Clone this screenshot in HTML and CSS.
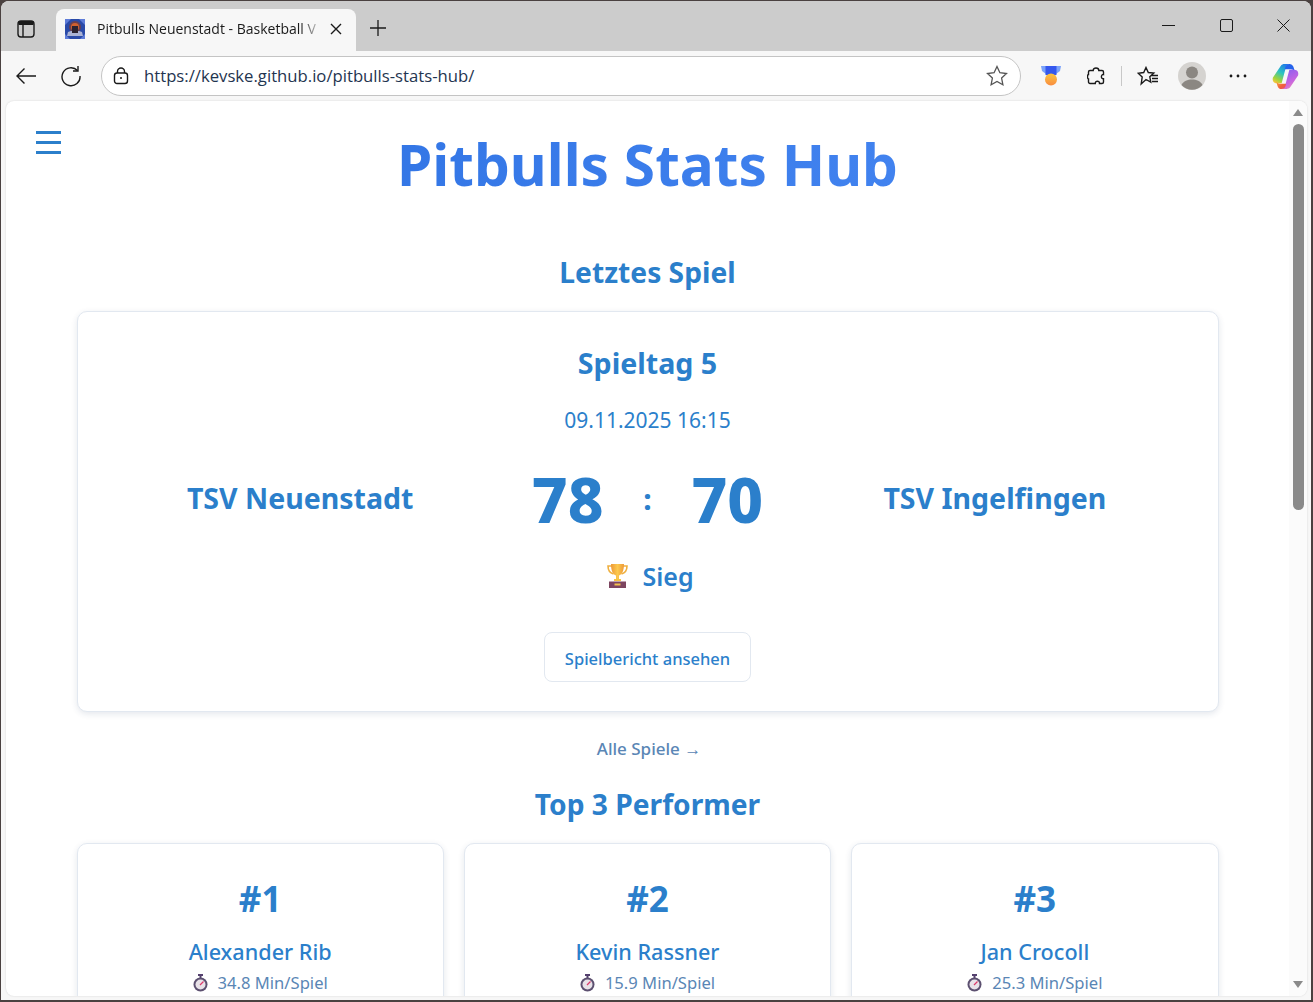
FILE: index.html
```html
<!DOCTYPE html>
<html lang="de">
<head>
	<meta charset="UTF-8">
	<title>Pitbulls Stats Hub</title>
	<link rel="stylesheet" href="styles.css">
</head>
<body>
	<div class="window">
		<div class="tabbar">
			<div class="tab-side">
				<svg width="18" height="18" viewBox="0 0 18 18" fill="none" stroke="#1a1a1a" stroke-width="1.4"><rect x="1" y="1" width="16" height="16" rx="3"/><path d="M1.500 3h15" stroke-width="4"/><path d="M6 4v13"/></svg>
			</div>
			<div class="tab">
				<svg class="favicon" width="20" height="20" viewBox="0 0 20 20"><rect width="20" height="20" fill="#2a4aa8"/><path d="M0 0h6L0 6zM20 0v6l-6-6zM0 20v-5l5 5zM20 20h-5l5-5z" fill="#5e7cd8"/><circle cx="10" cy="8" r="6" fill="#6a4050"/><circle cx="10" cy="8" r="4" fill="#d0602e"/><path d="M3 13l3-1h8l3 1 1 4H2z" fill="#aab2d4"/><path d="M7 7h6v7H7z" fill="#2a2230"/></svg>
				<span class="tab-title">Pitbulls Neuenstadt - Basketball V</span>
				<svg width="12" height="12" viewBox="0 0 12 12" stroke="#1a1a1a" stroke-width="1.4"><path d="M1 1l10 10M11 1L1 11"/></svg>
			</div>
			<svg class="new-tab" width="18" height="18" viewBox="0 0 18 18" stroke="#1a1a1a" stroke-width="1.3"><path d="M9 1v16M1 9h16"/></svg>
			<div class="window-buttons">
				<svg width="14" height="14" viewBox="0 0 14 14" stroke="#1a1a1a" stroke-width="1"><path d="M0 6.500h13"/></svg>
				<svg width="14" height="14" viewBox="0 0 14 14" fill="none" stroke="#1a1a1a" stroke-width="1"><rect x=".5" y=".5" width="12" height="12" rx="1.500"/></svg>
				<svg width="14" height="14" viewBox="0 0 14 14" stroke="#1a1a1a" stroke-width="1"><path d="M.5.5l12 12M12.500.5l-12 12"/></svg>
			</div>
		</div>

		<div class="toolbar">
			<svg width="22" height="18" viewBox="0 0 22 18" fill="none" stroke="#1a1a1a" stroke-width="1.4"><path d="M21 9H2M9.500 1.500L2 9l7.500 7.500"/></svg>
			<svg class="reload" width="22" height="22" viewBox="0 0 22 22" fill="none" stroke="#1a1a1a" stroke-width="1.4"><path d="M17.500 5.500A9 9 0 1 0 20 11"/><path d="M18 1v5h-5"/></svg>
			<div class="address">
				<svg width="16" height="18" viewBox="0 0 16 18" fill="none" stroke="#1a1a1a" stroke-width="1.4"><rect x="1.500" y="6" width="13" height="10.500" rx="2.500"/><path d="M4.500 6V4.500a3.500 3.500 0 0 1 7 0V6"/><circle cx="8" cy="11" r="1" fill="#1a1a1a" stroke="none"/></svg>
				<span class="url">https://kevske.github.io/pitbulls-stats-hub/</span>
				<svg class="star" width="22" height="22" viewBox="0 0 22 22" fill="none" stroke="#555" stroke-width="1.300"><path d="M11 1.500l2.900 6.200 6.600.8-4.900 4.600 1.300 6.700-5.900-3.300-5.900 3.300 1.300-6.700L1.500 8.500l6.600-.8z"/></svg>
			</div>
			<div class="toolbar-icons">
				<svg class="medal" width="20" height="20" viewBox="0 0 20 20"><defs><linearGradient id="medal-fill" x1="0" y1="0" x2="0" y2="1"><stop offset="0" stop-color="#fbc53f"/><stop offset="1" stop-color="#f98c40"/></linearGradient></defs><path d="M0 0h20l-1 5-4 3H5L1 5z" fill="#7aa2fa"/><path d="M4.500 0h11v9h-11z" fill="#3558ee"/><circle cx="10" cy="13.500" r="6" fill="url(#medal-fill)"/></svg>
				<svg class="puzzle" width="18" height="19" viewBox="0 0 18 19" fill="none" stroke="#1a1a1a" stroke-width="1.400"><path d="M6.200 3.500C6.200 1.800 7.400 1 9 1s2.800.8 2.800 2.500H15A1.500 1.500 0 0 1 16.500 5v2.600c-2.800-.4-2.800 4.600 0 4.200V15a1.500 1.500 0 0 1-1.500 1.500h-2.500c.3-3-4.500-3-4.200 0H3A1.500 1.500 0 0 1 1.500 15v-3C.2 12 .2 7.500 1.500 7.500V5A1.500 1.500 0 0 1 3 3.500z"/></svg>
				<span class="divider"></span>
				<svg class="favs" width="21" height="20" viewBox="0 0 21 20" fill="none" stroke="#1a1a1a" stroke-width="1.400"><path d="M9 1.500l2.300 5 5.500.6-4 3.700 1 5.400L9 13.500l-4.800 4.500 1-7-4-3.800 5.500-.7zM14 9.500h7M15 12.500h6M15 15.500h6"/></svg>
				<svg class="avatar" width="28" height="28" viewBox="0 0 28 28"><circle cx="14" cy="14" r="14" fill="#d5d3d0"/><circle cx="14" cy="10.500" r="6" fill="#8b8782"/><path d="M3.500 23c2-4 6-5.500 10.500-5.500s8.500 1.500 10.500 5.500a14 14 0 0 1-21 0z" fill="#8b8782"/></svg>
				<svg class="more" width="18" height="4" viewBox="0 0 18 4" fill="#1a1a1a"><circle cx="2" cy="2" r="1.400"/><circle cx="9" cy="2" r="1.400"/><circle cx="16" cy="2" r="1.400"/></svg>
				<svg class="copilot" width="27" height="27" viewBox="0 0 28 28">
					<defs>
						<linearGradient id="cop-left" x1="0.7" y1="0" x2="0.2" y2="1"><stop offset="0" stop-color="#1f7ae8"/><stop offset="0.45" stop-color="#2cc4c0"/><stop offset="0.8" stop-color="#9ed43c"/><stop offset="1" stop-color="#f5c83a"/></linearGradient>
						<linearGradient id="cop-right" x1="0.3" y1="0" x2="0.8" y2="1"><stop offset="0" stop-color="#8a5ff0"/><stop offset="0.6" stop-color="#c765e0"/><stop offset="1" stop-color="#f08ab8"/></linearGradient>
						<linearGradient id="cop-bottom" x1="0" y1="0" x2="1" y2="1"><stop offset="0" stop-color="#f7b23c"/><stop offset="0.6" stop-color="#f2603c"/><stop offset="1" stop-color="#e8487a"/></linearGradient>
					</defs>
					<path d="M9 3c1-1.500 2.500-2 4-2h6c-3 0-4.200 2-5 5l-4 15H5c-3.500 0-5-3-4-6z" fill="url(#cop-left)"/>
					<path d="M13 1h5c2 0 3.500 1 4.200 3l1.800 5.500c-1-2-2.500-3-4.500-3h-6.200C14 3 15 1 19 1z" fill="#2563eb"/>
					<path d="M19 25c-1 1.500-2.500 2-4 2H9c3 0 4.200-2 5-5l4-15h5c3.500 0 5 3 4 6z" fill="url(#cop-right)"/>
					<path d="M15 27h-5c-2 0-3.500-1-4.200-3L4 18.500c1 2 2.500 3 4.500 3h6.200C14 25 13 27 9 27z" fill="url(#cop-bottom)"/>
				</svg>
			</div>
		</div>

		<div class="viewport">
			<main class="page">
				<button class="menu-button"><span></span><span></span><span></span></button>
				<h1 class="title">Pitbulls Stats Hub</h1>

				<h2 class="section-title first">Letztes Spiel</h2>
				<section class="card game-card">
					<h3 class="matchday">Spieltag 5</h3>
					<p class="game-date">09.11.2025 16:15</p>
					<div class="score-row">
						<div class="team">TSV Neuenstadt</div>
						<div class="score">
							<span>78</span>
							<span class="colon">:</span>
							<span>70</span>
						</div>
						<div class="team">TSV Ingelfingen</div>
					</div>
					<div class="result">
						<svg width="21" height="26" viewBox="0 0 21 26"><defs><linearGradient id="cup" x1="0" y1="0" x2="1" y2="0"><stop offset="0" stop-color="#ee9a38"/><stop offset="0.5" stop-color="#fcc94e"/><stop offset="1" stop-color="#ee9a38"/></linearGradient></defs><path d="M5 3H1c0 4.500 2 7 5.500 8M16 3h4c0 4.500-2 7-5.500 8" fill="none" stroke="#efb040" stroke-width="1.600"/><path d="M4 1h13c0 7-2 10.500-5 11.500V16H9v-3.500C6 11.500 4 8 4 1z" fill="url(#cup)"/><path d="M7 16h7v2H7z" fill="#f7c544"/><path d="M2 18.500h17V25H2z" fill="#7d4560"/><path d="M7.500 20.500h6v2h-6z" fill="#f2c14e"/></svg>
						<span>Sieg</span>
					</div>
					<a class="report-button" href="#">Spielbericht ansehen</a>
				</section>

				<a class="all-games" href="#">Alle Spiele →</a>

				<h2 class="section-title">Top 3 Performer</h2>
				<section class="performers">
					<article class="card performer">
						<div class="rank">#1</div>
						<div class="player">Alexander Rib</div>
						<div class="stat">
							<svg class="watch" viewBox="0 0 15 18"><path d="M5 0h5v2H8.500v2h-2V2H5z" fill="#54406e"/><circle cx="7.500" cy="10.500" r="7" fill="#5c5070"/><circle cx="7.500" cy="10.500" r="5" fill="#e8e2e8"/><path d="M7 11l3.500-3.500" stroke="#dd3a6a" stroke-width="1.300"/></svg>
							34.8 Min/Spiel
						</div>
					</article>
					<article class="card performer">
						<div class="rank">#2</div>
						<div class="player">Kevin Rassner</div>
						<div class="stat">
							<svg class="watch" viewBox="0 0 15 18"><path d="M5 0h5v2H8.500v2h-2V2H5z" fill="#54406e"/><circle cx="7.500" cy="10.500" r="7" fill="#5c5070"/><circle cx="7.500" cy="10.500" r="5" fill="#e8e2e8"/><path d="M7 11l3.500-3.500" stroke="#dd3a6a" stroke-width="1.300"/></svg>
							15.9 Min/Spiel
						</div>
					</article>
					<article class="card performer">
						<div class="rank">#3</div>
						<div class="player">Jan Crocoll</div>
						<div class="stat">
							<svg class="watch" viewBox="0 0 15 18"><path d="M5 0h5v2H8.500v2h-2V2H5z" fill="#54406e"/><circle cx="7.500" cy="10.500" r="7" fill="#5c5070"/><circle cx="7.500" cy="10.500" r="5" fill="#e8e2e8"/><path d="M7 11l3.500-3.500" stroke="#dd3a6a" stroke-width="1.300"/></svg>
							25.3 Min/Spiel
						</div>
					</article>
				</section>
			</main>

			<div class="scrollbar">
				<span class="arrow-up"></span>
				<span class="thumb"></span>
				<span class="arrow-down"></span>
			</div>
		</div>
	</div>
</body>
</html>
```

FILE: styles.css
```css
* {
    margin: 0;
    padding: 0;
    box-sizing: border-box;
}

html, body {
    height: 100%;
    overflow: hidden;
}

body {
    padding: 1px 2px 2px 1px;
    background: #4a4140;
    font-family: "Noto Sans", "Open Sans", sans-serif;
    color: #2b7fcb;
}

.window {
    display: flex;
    flex-direction: column;
    height: 100%;
    border-radius: 8px 8px 0 0;
    overflow: hidden;
    background: #f7f7f7;
}

/* browser chrome */
.tabbar {
    display: flex;
    align-items: flex-end;
    flex: none;
    height: 50px;
    background: #cccccc;
}

.tab-side {
    display: flex;
    align-items: center;
    justify-content: center;
    align-self: center;
    width: 55px;
    padding: 5px 5px 0 0;
}

.tab {
    display: flex;
    align-items: center;
    width: 300px;
    height: 42px;
    padding: 0 13px 3px 9px;
    border-radius: 8px 8px 0 0;
    background: #f7f7f7;
}

.tab-title {
    width: 226px;
    margin: 0 7px 0 12px;
    overflow: hidden;
    white-space: nowrap;
    font-family: "Open Sans", sans-serif;
    font-size: 14px;
    color: #1a1a1a;
    -webkit-mask-image: linear-gradient(90deg, #000 90%, transparent);
    mask-image: linear-gradient(90deg, #000 90%, transparent);
}

.new-tab {
    align-self: center;
    margin: 4px 0 0 13px;
}

.window-buttons {
    display: flex;
    align-self: flex-start;
    gap: 43.500px;
    margin: 18px 0 0 auto;
    padding-right: 20px;
}

.toolbar {
    display: flex;
    align-items: center;
    flex: none;
    height: 50px;
    padding-left: 14px;
    background: #f7f7f7;
}

.reload {
    margin-left: 23px;
}

.address {
    display: flex;
    align-items: center;
    width: 920px;
    height: 40px;
    margin-left: 19px;
    padding: 0 12px 0 11px;
    border: 1px solid #c4c4c4;
    border-radius: 20px;
    background: #fff;
}

.url {
    margin-left: 15px;
    padding-bottom: 2px;
    font-family: "Open Sans", sans-serif;
    font-size: 16.700px;
    color: #1f3550;
}

.star {
    margin-left: auto;
}

.toolbar-icons {
    display: flex;
    align-items: center;
    margin-left: 20px;
}

.puzzle {
    margin-left: 26px;
}

.divider {
    width: 1px;
    height: 20px;
    margin-left: 16px;
    background: #c8c8c8;
}

.favs {
    margin-left: 15px;
}

.avatar {
    margin-left: 20px;
}

.more {
    margin-left: 23px;
}

.copilot {
    margin-left: 25px;
}

.viewport {
    position: relative;
    display: flex;
    flex: 1;
    min-height: 0;
    margin: 0 4px 4px 5px;
    border-radius: 8px;
    overflow: hidden;
    background: #fff;
    box-shadow: 0 0 2px rgba(0, 0, 0, 0.15);
}

.scrollbar {
    display: flex;
    flex-direction: column;
    align-items: center;
    flex: none;
    width: 18px;
    height: 100%;
    padding-top: 8px;
    background: #fbfbfb;
}

.arrow-up {
    border: 5px solid transparent;
    border-top: 0;
    border-bottom: 7px solid #8a8a8a;
}

.thumb {
    width: 11px;
    height: 386px;
    margin-top: 8px;
    border-radius: 5.500px;
    background: #8a8a8a;
}

.arrow-down {
    margin-top: auto;
    margin-bottom: 8px;
    border: 5px solid transparent;
    border-bottom: 0;
    border-top: 7px solid #8a8a8a;
}

/* page */
.page {
    position: relative;
    flex: 1;
    min-width: 0;
    padding: 0 70.500px;
    overflow: hidden;
    text-align: center;
}

.menu-button {
    position: absolute;
    top: 30px;
    left: 30px;
    display: flex;
    flex-direction: column;
    gap: 7px;
    width: 25px;
    border: 0;
    background: none;
}

.menu-button span {
    height: 3px;
    background: #2b7fcb;
}

.title {
    margin-top: 27px;
    font-size: 56.800px;
    line-height: 72px;
    font-weight: 700;
    background: linear-gradient(90deg, #2b6fe0, #4a8af5);
    -webkit-background-clip: text;
    background-clip: text;
    color: transparent;
}

.section-title {
    margin-top: 23px;
    font-size: 28.200px;
    line-height: 38px;
    font-weight: 700;
}

.section-title.first {
    margin-top: 53px;
}

.card {
    border: 1px solid #e2e8f0;
    border-radius: 10px;
    background: #fff;
    box-shadow: 0 2px 6px rgba(30, 60, 100, 0.12);
}

.game-card {
    height: 401px;
    margin-top: 20px;
    padding-top: 31px;
}

.matchday {
    font-size: 28.600px;
    line-height: 40px;
    font-weight: 700;
}

.game-date {
    margin-top: 23px;
    font-size: 21px;
    line-height: 28px;
}

.score-row {
    display: grid;
    grid-template-columns: 1fr 1fr 1fr;
    align-items: center;
    margin-top: 23px;
    padding: 0 49px;
}

.team {
    font-size: 28.500px;
    line-height: 40px;
    font-weight: 700;
}

.score {
    display: flex;
    align-items: center;
    justify-content: center;
    gap: 40px;
    padding-top: 2px;
    font-size: 62px;
    line-height: 80px;
    font-weight: 800;
}

.colon {
    font-size: 28px;
}

.result {
    display: flex;
    align-items: center;
    justify-content: center;
    gap: 14px;
    margin-top: 20px;
    padding-left: 6px;
    font-size: 25px;
    line-height: 34px;
    font-weight: 600;
}

.report-button {
    display: inline-block;
    margin-top: 39px;
    padding: 0 20px;
    height: 50px;
    border: 1px solid #e2e8f0;
    border-radius: 8px;
    font-size: 16.500px;
    line-height: 52px;
    font-weight: 500;
    text-decoration: none;
    color: #2b7fcb;
}

.all-games {
    display: block;
    margin-top: 24px;
    padding-left: 3px;
    font-size: 17px;
    line-height: 26px;
    font-weight: 500;
    text-decoration: none;
    color: #5a86b5;
}

.performers {
    display: grid;
    grid-template-columns: repeat(3, 1fr);
    gap: 20px;
    margin-top: 20px;
}

.performer {
    height: 300px;
    padding-top: 31px;
}

.rank {
    font-size: 35px;
    line-height: 48px;
    font-weight: 700;
}

.player {
    margin-top: 14px;
    font-size: 21.600px;
    line-height: 30px;
    font-weight: 500;
}

.stat {
    display: flex;
    align-items: center;
    justify-content: center;
    gap: 10px;
    margin-top: 3px;
    font-size: 16.600px;
    line-height: 26px;
    color: #5a86b5;
}

.watch {
    width: 15px;
    height: 18px;
}
```
